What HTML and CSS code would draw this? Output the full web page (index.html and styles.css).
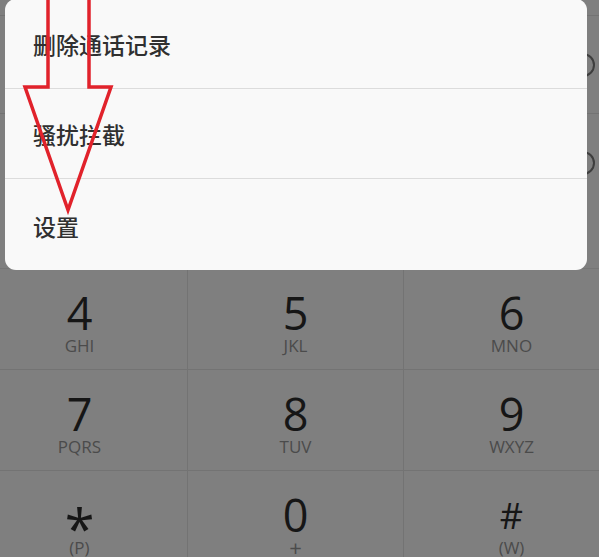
FILE: index.html
```html
<!DOCTYPE html>
<html lang="zh-CN">
<head>
<meta charset="utf-8">
<title>拨号</title>
<link rel="stylesheet" href="styles.css">
</head>
<body>
<div class="screen">
  <ul class="calllog">
    <li class="log-row"><span class="info-icon"></span></li>
    <li class="log-row"><span class="info-icon"></span></li>
  </ul>

  <div class="dialpad">
    <div class="key"><span class="digit">4</span><span class="sub">GHI</span></div>
    <div class="key"><span class="digit">5</span><span class="sub">JKL</span></div>
    <div class="key"><span class="digit">6</span><span class="sub">MNO</span></div>
    <div class="key"><span class="digit">7</span><span class="sub">PQRS</span></div>
    <div class="key"><span class="digit">8</span><span class="sub">TUV</span></div>
    <div class="key"><span class="digit">9</span><span class="sub">WXYZ</span></div>
    <div class="key"><span class="digit star">*</span><span class="sub">(P)</span></div>
    <div class="key"><span class="digit">0</span><span class="sub plus">+</span></div>
    <div class="key"><span class="digit hash">#</span><span class="sub">(W)</span></div>
  </div>

  <div class="menu">
    <div class="menu-item">删除通话记录</div>
    <div class="menu-item">骚扰拦截</div>
    <div class="menu-item">设置</div>
  </div>

  <svg class="arrow" width="140" height="230" viewBox="0 0 140 230">
    <polyline points="48,-4 48,87 25,87 68,210 111,87 89,87 89,-4" fill="none" stroke="#e1222b" stroke-width="3.5" stroke-linejoin="miter"/>
  </svg>
</div>
</body>
</html>
```

FILE: styles.css
```css
* { box-sizing: border-box; }

html, body {
  margin: 0;
  padding: 0;
}

body {
  background: #7f7f7f;
  font-family: "Open Sans", "Noto Sans", "Noto Sans CJK SC", sans-serif;
  overflow: hidden;
}

.screen {
  position: relative;
  width: 599px;
  height: 557px;
  overflow: hidden;
}

/* call log list behind the popup */
.calllog {
  list-style: none;
  margin: 0;
  padding: 15px 0 0 0;
  height: 268px;
  overflow: hidden;
}

.log-row {
  height: 98px;
  border-top: 1px solid #737373;
  display: flex;
  align-items: center;
  justify-content: flex-end;
  padding-right: 4px;
}

.info-icon {
  width: 24px;
  height: 24px;
  border: 2px solid #3e3e3e;
  border-radius: 50%;
}

/* dialpad */
.dialpad {
  display: grid;
  grid-template-columns: 216px 216px 216px;
  grid-auto-rows: 101px;
  margin-left: -28px;
  border-top: 1px solid #767676;
}

.key {
  display: flex;
  flex-direction: column;
  align-items: center;
  padding-top: 21px;
  border-right: 1px solid #737373;
  border-bottom: 1px solid #737373;
}

.digit {
  font-family: "Open Sans", sans-serif;
  font-size: 45px;
  line-height: 45px;
  height: 45px;
  color: #161616;
}

.digit.star {
  font-size: 54px;
  line-height: 45px;
  height: 45px;
  padding-top: 14px;
  overflow: visible;
}

.digit.hash {
  font-size: 36px;
  line-height: 36px;
  padding-top: 6px;
}

.sub {
  margin-top: 2px;
  font-family: "Open Sans", sans-serif;
  font-size: 17px;
  line-height: 17px;
  color: #4b4b4b;
}

.sub.plus {
  font-size: 22px;
  line-height: 18px;
  margin-top: 1px;
}

/* popup menu */
.menu {
  position: absolute;
  left: 5px;
  top: -1px;
  width: 582px;
  height: 271px;
  background: #f9f9f9;
  border-radius: 11px;
  display: flex;
  flex-direction: column;
  overflow: hidden;
}

.menu-item {
  height: 90px;
  display: flex;
  align-items: center;
  padding-left: 28px;
  font-family: "Noto Sans CJK SC", "Noto Sans", sans-serif;
  font-size: 23px;
  font-weight: 500;
  color: #303030;
  border-bottom: 1px solid #dcdcdc;
}

.menu-item:last-child {
  border-bottom: none;
  flex: 1;
  padding-top: 3px;
}

/* red annotation arrow */
.arrow {
  position: absolute;
  left: 0;
  top: 0;
}
```
